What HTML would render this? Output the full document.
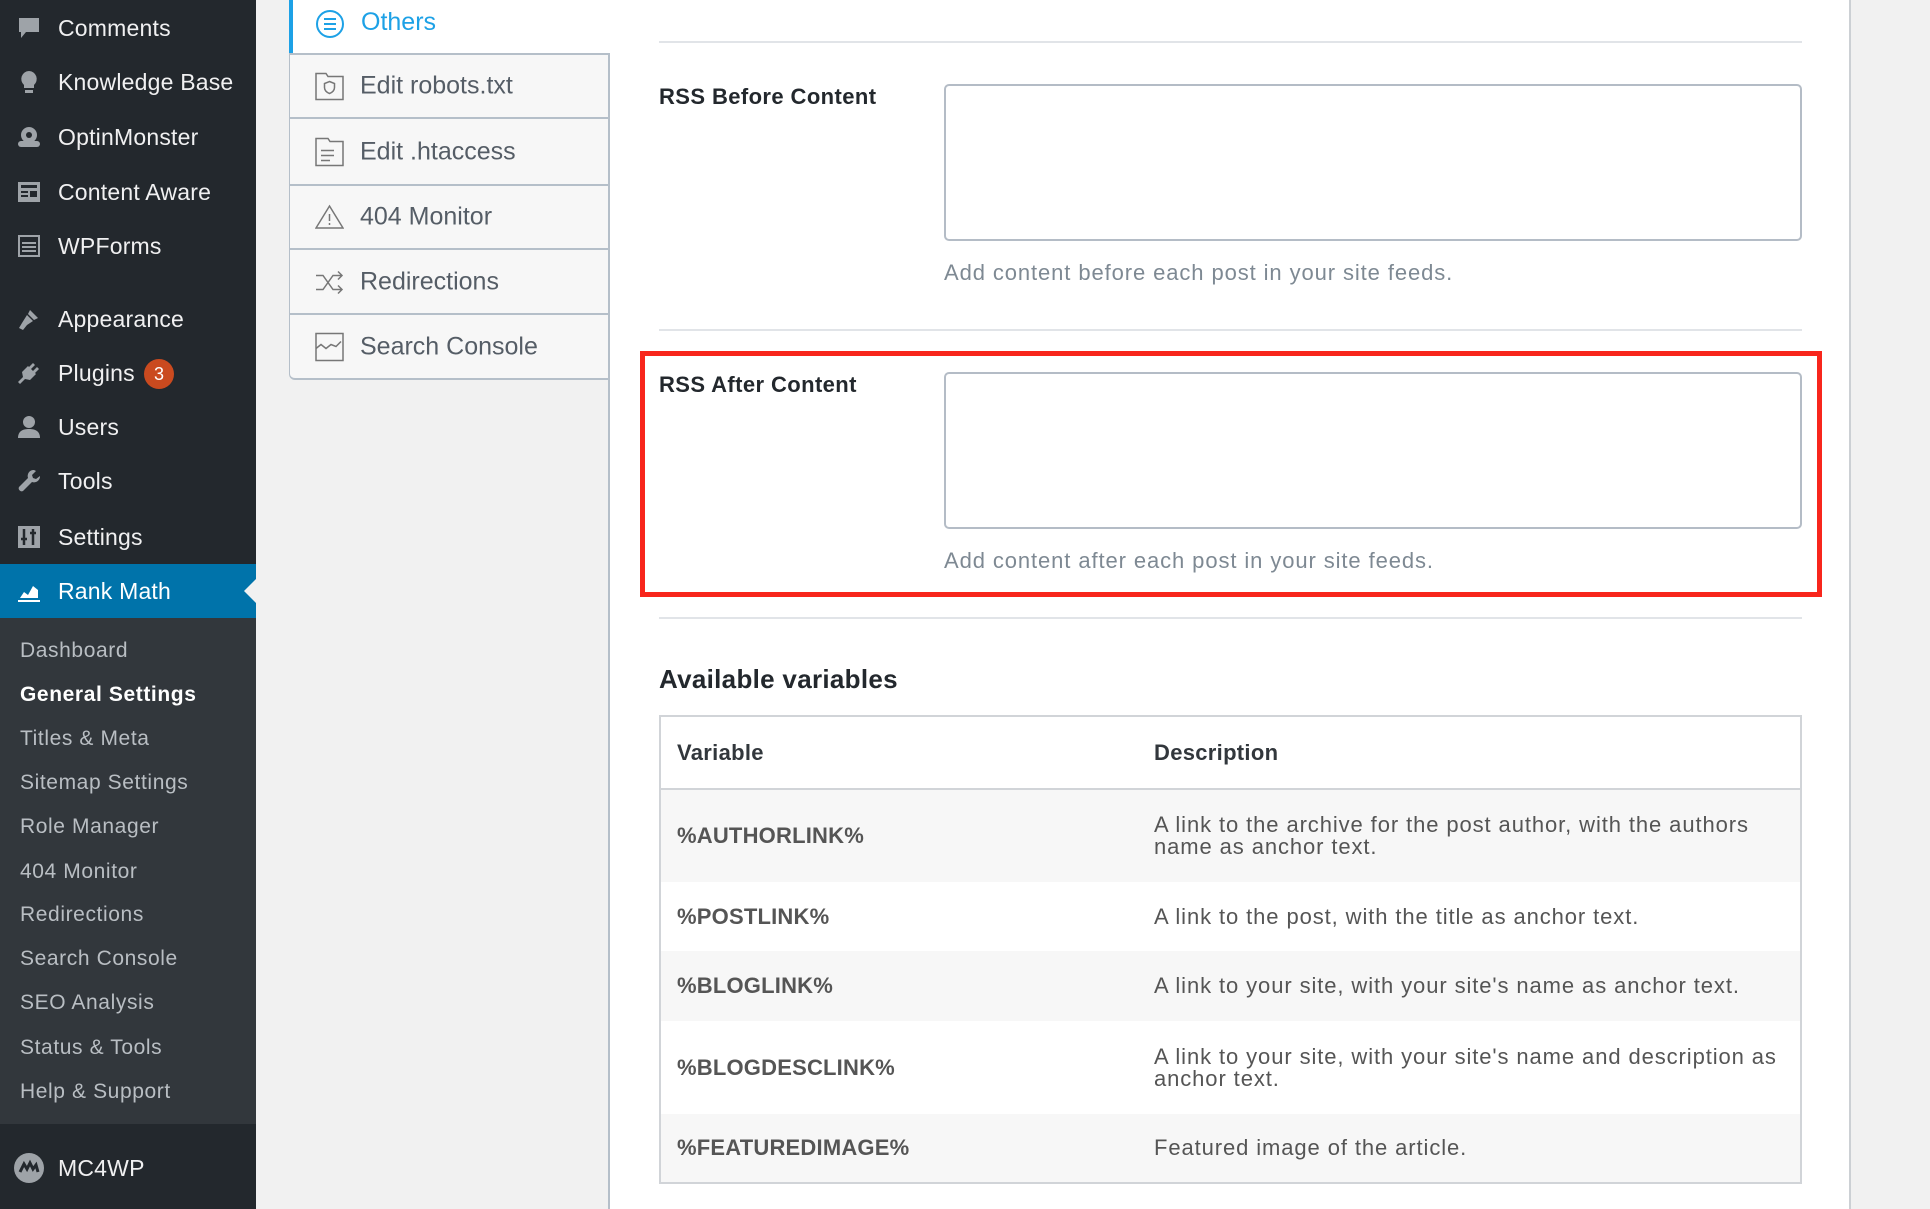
<!DOCTYPE html>
<html><head><meta charset="utf-8"><style>
*{margin:0;padding:0;box-sizing:border-box}
body{width:1930px;height:1209px;overflow:hidden;background:#f1f1f1;font-family:"Liberation Sans",sans-serif;position:relative}
.abs{position:absolute}
#side{left:0;top:0;width:256px;height:1209px;background:#23282d}
.mi{position:absolute;left:58px;font-size:23px;color:#f0f0f1;line-height:30px;transform:translateY(-15px);white-space:nowrap;letter-spacing:0.2px}
.ic{position:absolute;left:16px;width:26px;height:26px;transform:translateY(-13px)}
#sub{left:0;top:618px;width:256px;height:506px;background:#32373c}
.si{position:absolute;left:20px;font-size:21px;color:#b9bec3;line-height:28px;transform:translateY(-14px);white-space:nowrap;letter-spacing:0.6px}
.tab{position:absolute;left:289px;width:319px;background:#f7f7f7;border-left:1px solid #b5bfc9;border-bottom:2px solid #b5bfc9;}
.tab span{position:absolute;left:70px;top:50%;transform:translateY(-50%);font-size:25px;color:#555d66;white-space:nowrap}
.tab svg{position:absolute;left:25px;top:50%;transform:translateY(-50%)}
.hr{position:absolute;left:659px;width:1143px;height:2px;background:#e1e4e8}
.lbl{position:absolute;left:659px;font-size:22px;font-weight:bold;color:#23282d;letter-spacing:0.4px}
.ta{position:absolute;left:944px;width:858px;border:2px solid #b4bcc6;border-radius:5px;background:#fff}
.help{position:absolute;left:944px;font-size:22px;color:#7e8993;white-space:nowrap;letter-spacing:0.9px}
table{position:absolute;left:659px;top:715px;width:1143px;border-collapse:collapse;border:2px solid #d1d4d8;font-size:22px}
td,th{padding:0 0 0 16px;text-align:left;vertical-align:middle}
th{font-weight:bold;color:#32373c;height:73px;border-bottom:2px solid #d1d4d8;font-size:22px;letter-spacing:0.3px}
td.v{font-weight:bold;color:#555;width:478px;font-size:22px;letter-spacing:0.2px}
td.d{color:#555;line-height:22px;padding-right:18px;letter-spacing:0.9px}
tr.s{background:#f7f7f7}
</style></head><body>
<div id="side" class="abs">
<svg class="ic" style="top:28px" viewBox="0 0 26 26"><path d="M3 3h20v14H10l-5 6v-6H3z" fill="#9ea3a8"/></svg>
<div class="mi" style="top:28px">Comments</div>
<svg class="ic" style="top:82px" viewBox="0 0 26 26"><path d="M13 2a8 8 0 0 0-5 14v3h10v-3A8 8 0 0 0 13 2zM9 21h8v3H9z" fill="#9ea3a8"/></svg>
<div class="mi" style="top:82px">Knowledge Base</div>
<svg class="ic" style="top:137px" viewBox="0 0 26 26"><circle cx="13" cy="11" r="8" fill="#9ea3a8"/><rect x="2" y="17" width="22" height="6" rx="3" fill="#9ea3a8"/><circle cx="13" cy="11" r="3" fill="#23282d"/></svg>
<div class="mi" style="top:137px">OptinMonster</div>
<svg class="ic" style="top:192px" viewBox="0 0 26 26"><rect x="2" y="3" width="22" height="20" fill="#9ea3a8"/><path d="M5 6h16v3H5zM5 12h7v2H5zM5 16h7v2H5zM14 12h7v6h-7z" fill="#23282d"/></svg>
<div class="mi" style="top:192px">Content Aware</div>
<svg class="ic" style="top:246px" viewBox="0 0 26 26"><rect x="3" y="3" width="20" height="20" fill="none" stroke="#9ea3a8" stroke-width="2"/><path d="M6 10h14M6 14h14M6 18h14" stroke="#9ea3a8" stroke-width="2"/></svg>
<div class="mi" style="top:246px">WPForms</div>
<svg class="ic" style="top:319px" viewBox="0 0 26 26"><path d="M14 4l8 8-4 2-6-6zM11 9l6 6-6 4-4 5-4-2 3-5z" fill="#9ea3a8"/></svg>
<div class="mi" style="top:319px">Appearance</div>
<svg class="ic" style="top:373px" viewBox="0 0 26 26"><path d="M17 3l2 2-4 4 2 2 4-4 2 2-4 4 1 1-6 6-5-1-5 5-2-2 5-5-1-5 6-6 1 1z" fill="#9ea3a8"/></svg>
<div class="mi" style="top:373px">Plugins</div>
<div class="abs" style="left:144px;top:359px;width:30px;height:30px;border-radius:15px;background:#ca4a1f;color:#fff;font-size:18px;text-align:center;line-height:30px">3</div>
<svg class="ic" style="top:427px" viewBox="0 0 26 26"><circle cx="13" cy="8" r="6" fill="#9ea3a8"/><path d="M2 24c0-7 5-9 11-9s11 2 11 9z" fill="#9ea3a8"/></svg>
<div class="mi" style="top:427px">Users</div>
<svg class="ic" style="top:481px" viewBox="0 0 26 26"><path d="M18 2a6 6 0 0 0-6 8L3 19a3 3 0 0 0 4 4l9-9a6 6 0 0 0 8-6l-4 3-3-1-1-3 4-4z" fill="#9ea3a8"/></svg>
<div class="mi" style="top:481px">Tools</div>
<svg class="ic" style="top:537px" viewBox="0 0 26 26"><rect x="2" y="2" width="22" height="22" fill="#9ea3a8"/><path d="M8 5v16M5 15h6M17 5v16M14 9h6" stroke="#23282d" stroke-width="2.5"/></svg>
<div class="mi" style="top:537px">Settings</div>
<div class="abs" style="left:0;top:564px;width:256px;height:54px;background:#0073aa"></div>
<div class="abs" style="left:244px;top:579px;width:0;height:0;border-top:12px solid transparent;border-bottom:12px solid transparent;border-right:12px solid #f1f1f1"></div>
<svg class="ic" style="top:591px" viewBox="0 0 26 26"><path d="M4 20l4-6 4 3 5-9 5 4v8z" fill="#fff"/><path d="M2 23h22" stroke="#fff" stroke-width="2"/></svg>
<div class="mi" style="top:591px;color:#fff">Rank Math</div>
</div>
<div id="sub" class="abs"></div>
<div class="si" style="top:651px">Dashboard</div>
<div class="si" style="top:695px;color:#fff;font-weight:bold">General Settings</div>
<div class="si" style="top:739px">Titles &amp; Meta</div>
<div class="si" style="top:783px">Sitemap Settings</div>
<div class="si" style="top:827px">Role Manager</div>
<div class="si" style="top:872px">404 Monitor</div>
<div class="si" style="top:915px">Redirections</div>
<div class="si" style="top:959px">Search Console</div>
<div class="si" style="top:1003px">SEO Analysis</div>
<div class="si" style="top:1048px">Status &amp; Tools</div>
<div class="si" style="top:1092px">Help &amp; Support</div>
<svg class="ic" style="top:1168px;width:30px;height:30px;left:14px;transform:translateY(-15px)" viewBox="0 0 30 30"><circle cx="15" cy="15" r="15" fill="#9ea3a8"/><path d="M6 19l4-8 3 5 3-6 3 6 3-4 2 7" stroke="#23282d" stroke-width="3" fill="none"/></svg>
<div class="mi" style="top:1168px">MC4WP</div>

<div class="abs" style="left:608px;top:0;width:1243px;height:1209px;background:#fff;border-left:2px solid #b5bfc9;border-right:2px solid #ccd0d4"></div>

<div class="abs" style="left:289px;top:0;width:321px;height:53px;background:#fff;border-left:4px solid #1da1e6"></div>
<svg class="abs" style="left:315px;top:9px" width="30" height="30" viewBox="0 0 30 30"><circle cx="15" cy="15" r="13" fill="none" stroke="#1da1e6" stroke-width="2"/><path d="M9 10h12M9 15h12M9 20h12" stroke="#1da1e6" stroke-width="2"/></svg>
<div class="abs" style="left:361px;top:8px;font-size:25px;color:#1da1e6">Others</div>
<div class="tab" style="top:53px;height:66px;border-top:2px solid #b5bfc9"><svg width="29" height="29" viewBox="0 0 29 29"><path d="M1 2h10l2 3h15v23H1z" fill="none" stroke="#777" stroke-width="1.5"/><path d="M14.5 10l5 2v4c0 3-2.5 5-5 6-2.5-1-5-3-5-6v-4z" fill="none" stroke="#777" stroke-width="1.5"/></svg><span>Edit robots.txt</span></div>
<div class="tab" style="top:119px;height:67px"><svg width="29" height="29" viewBox="0 0 29 29"><path d="M1 1h12l2 3h13v24H1z" fill="none" stroke="#777" stroke-width="1.5"/><path d="M6 13h13M6 18h13M6 23h9" stroke="#777" stroke-width="1.5"/></svg><span>Edit .htaccess</span></div>
<div class="tab" style="top:186px;height:64px"><svg width="29" height="26" viewBox="0 0 29 26"><path d="M14.5 2L28 24H1z" fill="none" stroke="#777" stroke-width="1.5"/><path d="M14.5 10v7M14.5 19v2" stroke="#777" stroke-width="1.5"/></svg><span>404 Monitor</span></div>
<div class="tab" style="top:250px;height:65px"><svg width="29" height="29" viewBox="0 0 29 29"><path d="M1 8h7l10 14h8M1 22h7l10-14h8M23 4l4 4-4 4M23 18l4 4-4 4" fill="none" stroke="#777" stroke-width="1.5"/></svg><span>Redirections</span></div>
<div class="tab" style="top:315px;height:65px;border-bottom-left-radius:6px"><svg width="29" height="29" viewBox="0 0 29 29"><rect x="1" y="1" width="27" height="27" fill="none" stroke="#777" stroke-width="1.5"/><path d="M1 16l5-4 5 4 5-4 5 2 5-5" fill="none" stroke="#777" stroke-width="1.5"/></svg><span>Search Console</span></div>

<div class="hr" style="top:41px"></div>
<div class="lbl" style="top:84px">RSS Before Content</div>
<div class="ta" style="top:84px;height:157px"></div>
<div class="help" style="top:260px">Add content before each post in your site feeds.</div>
<div class="hr" style="top:329px"></div>
<div class="abs" style="left:640px;top:351px;width:1182px;height:246px;border:5px solid #f8261c"></div>
<div class="lbl" style="top:372px">RSS After Content</div>
<div class="ta" style="top:372px;height:157px"></div>
<div class="help" style="top:548px">Add content after each post in your site feeds.</div>
<div class="hr" style="top:617px"></div>
<div class="abs" style="left:659px;top:664px;font-size:26px;font-weight:bold;color:#23282d;letter-spacing:0.3px">Available variables</div>
<table>
<tr><th>Variable</th><th>Description</th></tr>
<tr class="s" style="height:93px"><td class="v">%AUTHORLINK%</td><td class="d">A link to the archive for the post author, with the authors name as anchor text.</td></tr>
<tr style="height:69px"><td class="v">%POSTLINK%</td><td class="d">A link to the post, with the title as anchor text.</td></tr>
<tr class="s" style="height:70px"><td class="v">%BLOGLINK%</td><td class="d">A link to your site, with your site's name as anchor text.</td></tr>
<tr style="height:93px"><td class="v">%BLOGDESCLINK%</td><td class="d">A link to your site, with your site's name and description as anchor text.</td></tr>
<tr class="s" style="height:69px"><td class="v">%FEATUREDIMAGE%</td><td class="d">Featured image of the article.</td></tr>
</table>
</body></html>
